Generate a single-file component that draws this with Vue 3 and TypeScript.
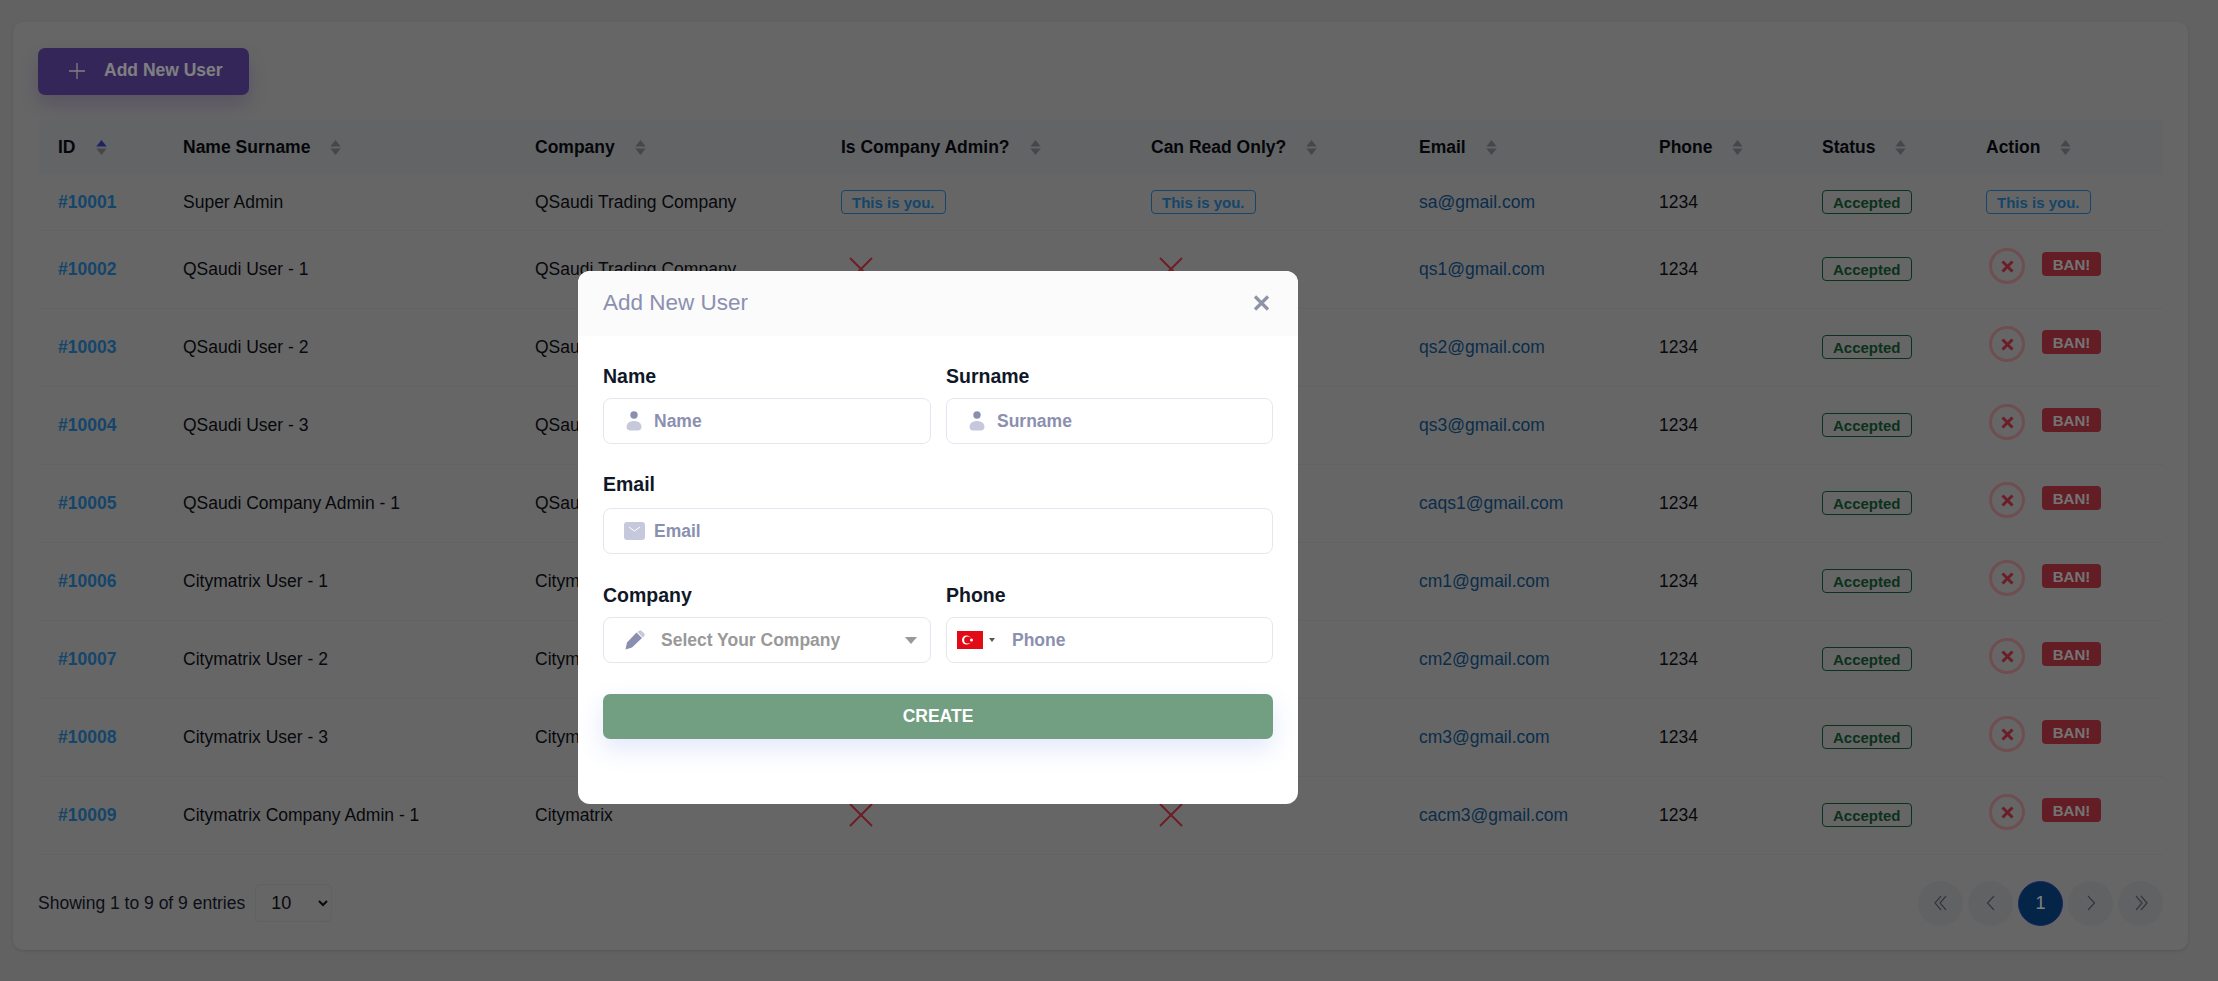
<script setup lang="ts">
interface UserRow {
  id: string
  name: string
  company: string
  email: string
  self?: boolean
}

const columns = [
  { label: 'ID', width: 125 },
  { label: 'Name Surname', width: 352 },
  { label: 'Company', width: 306 },
  { label: 'Is Company Admin?', width: 310 },
  { label: 'Can Read Only?', width: 268 },
  { label: 'Email', width: 240 },
  { label: 'Phone', width: 163 },
  { label: 'Status', width: 164 },
  { label: 'Action', width: 197 }
]

const qsaudi = 'QSaudi Trading Company'

const users: UserRow[] = [
  { id: '#10001', name: 'Super Admin', company: qsaudi, email: 'sa@gmail.com', self: true },
  { id: '#10002', name: 'QSaudi User - 1', company: qsaudi, email: 'qs1@gmail.com' },
  { id: '#10003', name: 'QSaudi User - 2', company: qsaudi, email: 'qs2@gmail.com' },
  { id: '#10004', name: 'QSaudi User - 3', company: qsaudi, email: 'qs3@gmail.com' },
  { id: '#10005', name: 'QSaudi Company Admin - 1', company: qsaudi, email: 'caqs1@gmail.com' },
  { id: '#10006', name: 'Citymatrix User - 1', company: 'Citymatrix', email: 'cm1@gmail.com' },
  { id: '#10007', name: 'Citymatrix User - 2', company: 'Citymatrix', email: 'cm2@gmail.com' },
  { id: '#10008', name: 'Citymatrix User - 3', company: 'Citymatrix', email: 'cm3@gmail.com' },
  { id: '#10009', name: 'Citymatrix Company Admin - 1', company: 'Citymatrix', email: 'cacm3@gmail.com' }
]
</script>

<template>
  <div class="page">
    <section class="card">
      <button class="add-btn" type="button">
        <svg width="18" height="18" viewBox="0 0 18 18" fill="none" stroke="#fff" stroke-width="1.3">
          <path d="M9 1v16M1 9h16" />
        </svg>
        <span>Add New User</span>
      </button>

      <table class="users">
        <colgroup>
          <col v-for="c in columns" :key="c.label" :style="{ width: c.width + 'px' }" />
        </colgroup>
        <thead>
          <tr>
            <th v-for="(c, i) in columns" :key="c.label">
              <span class="th-inner">
                {{ c.label }}
                <svg class="sort" width="11" height="15" viewBox="0 0 11 15">
                  <path d="M5.500 0l5.200 6.400H.3z" :fill="i === 0 ? '#3e46c8' : '#8c8f95'" />
                  <path d="M5.500 15L.3 8.600h10.400z" fill="#8c8f95" />
                </svg>
              </span>
            </th>
          </tr>
        </thead>
        <tbody>
          <tr v-for="u in users" :key="u.id" :class="{ self: u.self }">
            <td><a class="link">{{ u.id }}</a></td>
            <td>{{ u.name }}</td>
            <td>{{ u.company }}</td>
            <td v-for="n in 2" :key="n">
              <span v-if="u.self" class="badge you">This is you.</span>
              <svg v-else class="cross" width="24" height="24" viewBox="0 0 24 24" fill="none" stroke="#d83c4c" stroke-width="2">
                <path d="M1 1l22 22M23 1L1 23" />
              </svg>
            </td>
            <td class="mail">{{ u.email }}</td>
            <td>1234</td>
            <td><span class="badge ok">Accepted</span></td>
            <td>
              <span v-if="u.self" class="badge you">This is you.</span>
              <div v-else class="actions">
                <span class="round-x">
                  <svg width="13" height="13" viewBox="0 0 13 13" fill="none" stroke="#d83c4c" stroke-width="3">
                    <path d="M1.500 1.500l10 10M11.500 1.500l-10 10" />
                  </svg>
                </span>
                <span class="ban">BAN!</span>
              </div>
            </td>
          </tr>
        </tbody>
      </table>

      <footer class="table-foot">
        <div class="entries">
          <span>Showing 1 to 9 of 9 entries</span>
          <select class="per-page">
            <option>10</option>
          </select>
        </div>
        <nav class="pager">
          <span class="pg">
            <svg width="16" height="16" viewBox="0 0 16 16" fill="none" stroke="#6a6c74" stroke-width="1.2">
              <path d="M8 1L2 8l6 7M13 1L7 8l6 7" />
            </svg>
          </span>
          <span class="pg">
            <svg width="16" height="16" viewBox="0 0 16 16" fill="none" stroke="#6a6c74" stroke-width="1.2">
              <path d="M11 1L4.500 8l6.500 7" />
            </svg>
          </span>
          <span class="pg active">1</span>
          <span class="pg">
            <svg width="16" height="16" viewBox="0 0 16 16" fill="none" stroke="#6a6c74" stroke-width="1.2">
              <path d="M5 1l6.500 7L5 15" />
            </svg>
          </span>
          <span class="pg">
            <svg width="16" height="16" viewBox="0 0 16 16" fill="none" stroke="#6a6c74" stroke-width="1.2">
              <path d="M3 1l6 7-6 7M8 1l6 7-6 7" />
            </svg>
          </span>
        </nav>
      </footer>
    </section>

    <div class="backdrop"></div>

    <div class="modal">
      <header class="modal-head">
        <h2>Add New User</h2>
        <svg width="17" height="16" viewBox="0 0 17 16" fill="none" stroke="#8f93a8" stroke-width="3.2">
          <path d="M2 1.500l13 13M15 1.500l-13 13" />
        </svg>
      </header>

      <form class="modal-body" @submit.prevent>
        <div class="form-row">
          <label class="field">
            <span class="lbl">Name</span>
            <span class="control">
              <svg class="ico-user" width="16" height="20" viewBox="0 0 16 20">
                <circle cx="8" cy="4" r="3.700" fill="#8a8fb0" />
                <path d="M0.500 16c0-4 3.500-6 7.500-6s7.500 2 7.500 6c0 2.500-2 3.500-3.500 3.500H4c-1.500 0-3.500-1-3.500-3.500z" fill="#c6c9dc" />
              </svg>
              <input type="text" placeholder="Name" />
            </span>
          </label>
          <label class="field">
            <span class="lbl">Surname</span>
            <span class="control">
              <svg class="ico-user" width="16" height="20" viewBox="0 0 16 20">
                <circle cx="8" cy="4" r="3.700" fill="#8a8fb0" />
                <path d="M0.500 16c0-4 3.500-6 7.500-6s7.500 2 7.500 6c0 2.500-2 3.500-3.500 3.500H4c-1.500 0-3.500-1-3.500-3.500z" fill="#c6c9dc" />
              </svg>
              <input type="text" placeholder="Surname" />
            </span>
          </label>
        </div>

        <label class="field email-field">
          <span class="lbl">Email</span>
          <span class="control">
            <svg class="ico-mail" width="21" height="18" viewBox="0 0 21 18">
              <rect width="21" height="18" rx="3" fill="#c6c9dc" />
              <path d="M5 5l5.500 4 5.500-4" fill="none" stroke="#fff" stroke-width="1" />
            </svg>
            <input type="email" placeholder="Email" />
          </span>
        </label>

        <div class="form-row">
          <div class="field">
            <span class="lbl">Company</span>
            <div class="control select">
              <svg class="ico-pen" width="20" height="20" viewBox="0 0 20 20">
                <path d="M11.500 2.500L2 12.500 0.500 19.500l6.500-2L17 8z" fill="#8a8fb0" />
                <path d="M12.500 2l1.200-1.100c.9-.8 2.100-.8 3 0l2.400 2.300c.9.9.9 2.100 0 3L17.800 7.400z" fill="#c6c9dc" />
              </svg>
              <span class="select-text">Select Your Company</span>
              <svg class="caret" width="12" height="7" viewBox="0 0 12 7"><path d="M0 0h12L6 7z" fill="#999" /></svg>
            </div>
          </div>
          <label class="field">
            <span class="lbl">Phone</span>
            <span class="control phone">
              <svg width="26" height="18" viewBox="0 0 26 18">
                <rect width="26" height="18" fill="#e30a17" />
                <circle cx="9.500" cy="9" r="4.500" fill="#fff" />
                <circle cx="10.700" cy="9" r="3.600" fill="#e30a17" />
                <circle cx="14.500" cy="9" r="1.500" fill="#fff" />
              </svg>
              <svg class="flag-caret" width="6" height="4" viewBox="0 0 6 4"><path d="M0 0h6L3 4z" fill="#555" /></svg>
              <input type="tel" placeholder="Phone" />
            </span>
          </label>
        </div>

        <button class="create" type="submit">CREATE</button>
      </form>
    </div>
  </div>
</template>

<style>
html,
body {
  margin: 0;
  background: #b2b2b2;
}
</style>

<style scoped>
.page {
  position: relative;
  box-sizing: border-box;
  height: 981px;
  padding: 22px 30px 31px 13px;
  overflow: hidden;
  background: #c4c4c4;
  font-family: 'Liberation Sans', Arial, sans-serif;
  font-size: 17.5px;
  color: #181c32;
}

.card {
  box-sizing: border-box;
  height: 928px;
  padding: 26px 25px 25px;
  background: #cdcdcd;
  border-radius: 10px;
  box-shadow: 0 1px 3px rgba(0, 0, 0, 0.12);
}

.add-btn {
  display: flex;
  align-items: center;
  gap: 18px;
  width: 211px;
  height: 47px;
  padding: 0 0 2px 30px;
  border: 0;
  border-radius: 7px;
  background: #6a4cb5;
  box-shadow: 0 10px 20px rgba(106, 76, 181, 0.28);
  color: #fff;
  font: bold 17.5px 'Liberation Sans', Arial, sans-serif;
}

.users {
  width: 2125px;
  margin-top: 25px;
  border-collapse: collapse;
  table-layout: fixed;
}

.users th {
  box-sizing: border-box;
  height: 55px;
  padding: 0 0 0 20px;
  background: #c5c8cd;
  text-align: left;
  font-size: 17.5px;
  font-weight: bold;
  color: #0b0d14;
}

.th-inner {
  display: inline-flex;
  align-items: center;
  gap: 20px;
}

.users td {
  box-sizing: border-box;
  height: 78px;
  padding: 0 0 0 20px;
  border-bottom: 1px solid #c4c4c4;
  white-space: nowrap;
  color: #0f1118;
}

.users tr.self td {
  height: 55px;
}

.link {
  color: #2b8bd4;
  font-weight: bold;
}

.users td.mail {
  color: #155a94;
}

.cross {
  display: block;
  margin-left: 8px;
}

.badge {
  display: inline-flex;
  align-items: center;
  box-sizing: border-box;
  height: 24px;
  padding: 0 10px;
  border: 1px solid;
  border-radius: 4px;
  font-size: 15px;
  font-weight: bold;
  vertical-align: middle;
}

.ok {
  border-color: #14643a;
  color: #14643a;
}

.you {
  border-color: #2b8bd4;
  color: #2b8bd4;
}

.actions {
  display: flex;
  align-items: center;
  gap: 17px;
  margin: 0 0 6px 3px;
}

.round-x {
  display: flex;
  align-items: center;
  justify-content: center;
  box-sizing: border-box;
  width: 36px;
  height: 36px;
  border: 3px solid #dd9ca2;
  border-radius: 50%;
}

.ban {
  display: flex;
  align-items: center;
  justify-content: center;
  width: 59px;
  height: 24px;
  margin-bottom: 4px;
  border-radius: 4px;
  background: #c43a4a;
  color: #e8e8e8;
  font-size: 15px;
  font-weight: bold;
}

.table-foot {
  display: flex;
  align-items: center;
  justify-content: space-between;
  margin-top: 26px;
}

.entries {
  display: flex;
  align-items: center;
  gap: 10px;
}

.per-page {
  width: 77px;
  height: 38px;
  padding-left: 11px;
  border: 1px solid #c2c2c2;
  border-radius: 5px;
  background: transparent;
  color: #0f1118;
  font: 18px 'Liberation Sans', Arial, sans-serif;
}

.pager {
  display: flex;
  gap: 5px;
}

.pg {
  display: flex;
  align-items: center;
  justify-content: center;
  width: 45px;
  height: 45px;
  border-radius: 50%;
  background: #c3c5c9;
}

.pg.active {
  box-sizing: border-box;
  border: 1px solid #2a4fc0;
  background: #0a4a90;
  color: #fff;
  font-size: 18px;
}

.backdrop {
  position: absolute;
  inset: 0;
  background: rgba(0, 0, 0, 0.5);
}

.modal {
  position: absolute;
  left: 578px;
  top: 271px;
  display: flex;
  flex-direction: column;
  width: 720px;
  height: 533px;
  overflow: hidden;
  border-radius: 12px;
  background: #fff;
}

.modal-head {
  display: flex;
  align-items: center;
  justify-content: space-between;
  box-sizing: border-box;
  height: 65px;
  padding: 0 28px 2px 25px;
  background: #fbfbfc;
}

.modal-head h2 {
  margin: 0;
  font-size: 22.5px;
  font-weight: normal;
  color: #8b90b0;
}

.modal-body {
  display: flex;
  flex-direction: column;
  gap: 30px;
  padding: 29px 25px 0;
}

.form-row {
  display: grid;
  grid-template-columns: 328px 327px;
  gap: 15px;
}

.field {
  display: block;
}

.lbl {
  display: block;
  height: 22px;
  margin-bottom: 11px;
  line-height: 22px;
  font-size: 19.5px;
  font-weight: bold;
  color: #101828;
}

.email-field {
  margin-top: -1px;
}

.email-field .lbl {
  margin-bottom: 13px;
}

.control {
  display: flex;
  align-items: center;
  box-sizing: border-box;
  height: 46px;
  padding-left: 21px;
  border: 1px solid #e4e7f0;
  border-radius: 8px;
  background: #fff;
}

.control input {
  flex: 1;
  min-width: 0;
  padding: 0;
  border: 0;
  outline: 0;
  background: transparent;
  font: bold 17.5px 'Liberation Sans', Arial, sans-serif;
}

.control input::placeholder {
  color: #8b90b0;
  opacity: 1;
}

.ico-user {
  margin-left: 1px;
  margin-right: 12px;
}

.ico-mail {
  margin-right: 9px;
  margin-left: -1px;
}

.ico-pen {
  margin-right: 16px;
}

.select {
  padding-right: 13px;
}

.select-text {
  flex: 1;
  color: #999;
  font-size: 17.5px;
  font-weight: bold;
}

.phone {
  padding-left: 10px;
}

.flag-caret {
  margin: 0 17px 0 6px;
}

.create {
  height: 45px;
  margin-top: 1px;
  border: 0;
  border-radius: 7px;
  background: #729e82;
  box-shadow: 0 10px 25px rgba(80, 110, 230, 0.16);
  color: #fff;
  font: bold 17.5px 'Liberation Sans', Arial, sans-serif;
}
</style>
